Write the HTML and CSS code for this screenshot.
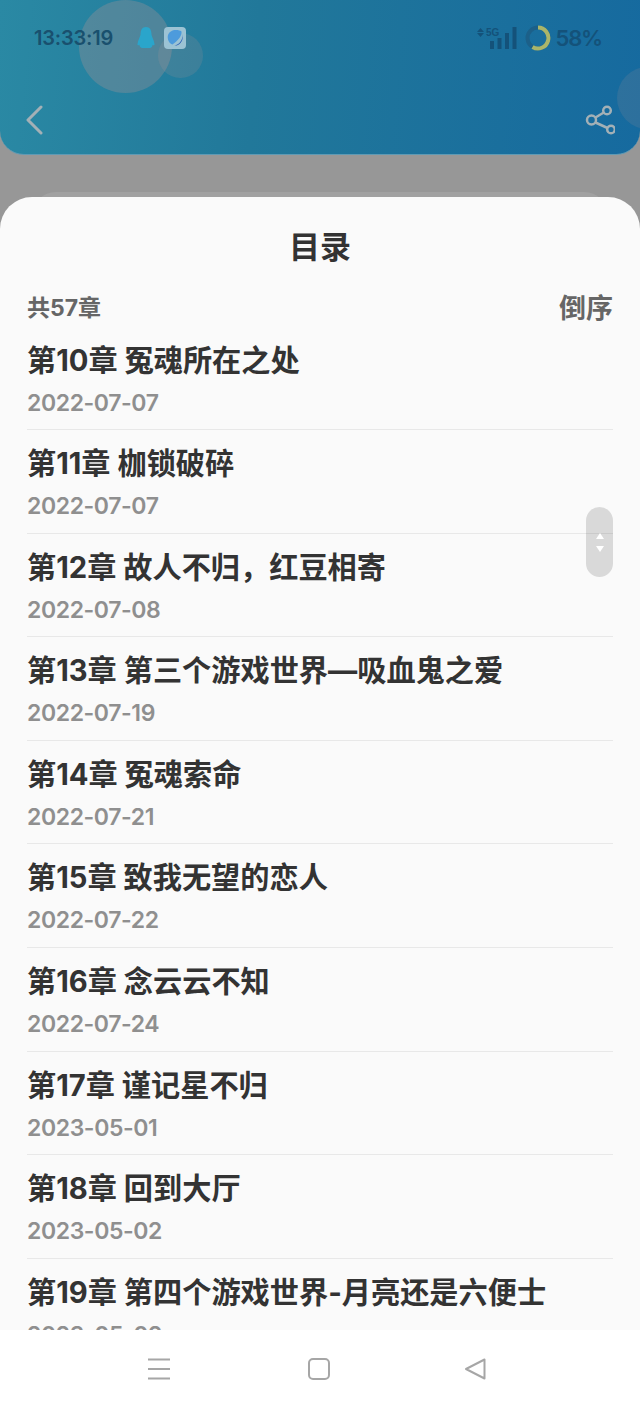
FILE: index.html
```html
<!DOCTYPE html>
<html lang="zh">
<head>
    <meta charset="UTF-8">
    <meta name="viewport" content="width=device-width, initial-scale=1.0">
    <title>目录</title>
    <link rel="stylesheet" href="styles.css">
</head>
<body>
    <div class="screen">
        <header class="header">
            <span class="bubble bubble-big"></span>
            <span class="bubble bubble-small"></span>
            <span class="bubble bubble-right"></span>
            <div class="status">
                <span class="time">13:33:19</span>
                <svg class="qq" width="18" height="22" viewBox="0 0 18 22">
                    <path fill="#2aa5cb" d="M9 0C5 0 3.600 3 3.500 7.500C3.400 9.500 1 13 .5 17c-.2 1.600.8 1.700 1.800.8C3 20.500 4 21 5 21h8c1 0 2-.5 2.700-3.200 1 .9 2 .8 1.800-.8-.5-4-2.900-7.500-3-9.500C14.400 3 13 0 9 0z"/>
                </svg>
                <svg class="app" width="22" height="22" viewBox="0 0 22 22">
                    <rect width="22" height="22" rx="4" fill="#9cc3d4"/>
                    <path fill="#4d9bdc" d="M4 8c1-3 4-5 8-5 2.500 0 4 .5 5.500 1.500C18 8 15 13 8.500 17.500 5 17 3 12 4 8z"/>
                    <path fill="#2c5fb5" d="M18.500 7c.5 6-3.500 11-8 11.500 4 .5 8-3 8.200-8 0-1.200-.1-2.500-.2-3.500z"/>
                </svg>
                <span class="status-right">
                    <svg class="signal" width="40" height="22" viewBox="0 0 40 22">
                        <path fill="#14527a" d="M3.500 1 7 5H0zM3.500 10 0 6h7z"/>
                        <text x="9" y="9" class="five-g">5G</text>
                        <rect x="13" y="14" width="4" height="8" fill="#14527a"/>
                        <rect x="20.500" y="11" width="4" height="11" fill="#14527a"/>
                        <rect x="28" y="6" width="4" height="16" fill="#14527a"/>
                        <rect x="35.500" y="0" width="4" height="22" fill="#14527a"/>
                    </svg>
                    <svg class="battery" width="26" height="26" viewBox="0 0 26 26">
                        <circle cx="13" cy="13" r="10.500" fill="none" stroke="#1c6089" stroke-width="4"/>
                        <path d="M13 2.500A10.500 10.500 0 1 1 7.500 22" fill="none" stroke="#a9b56a" stroke-width="4"/>
                    </svg>
                    <span class="percent">58%</span>
                </span>
            </div>
            <div class="toolbar">
                <svg width="18" height="30" viewBox="0 0 18 30">
                    <path d="M16 2 3 15l13 13" fill="none" stroke="#a3b0b6" stroke-width="3" stroke-linecap="round" stroke-linejoin="round"/>
                </svg>
                <svg width="30" height="30" viewBox="0 0 30 30">
                    <g fill="none" stroke="#a3b0b6" stroke-width="2.500">
                        <circle cx="6.500" cy="15" r="4.500"/>
                        <circle cx="22" cy="5.500" r="3.800"/>
                        <circle cx="26" cy="24.500" r="3.800"/>
                        <path d="M10.500 12.500 18.800 7.500M10.500 17.500l12 5.500"/>
                    </g>
                </svg>
            </div>
        </header>

        <div class="backdrop">
            <div class="sheet-behind"></div>
            <section class="sheet">
                <h1 class="sheet-title">目录</h1>
                <div class="summary">
                    <span class="count">共57章</span>
                    <span class="sort">倒序</span>
                </div>
                <ul class="chapters">
                    <li class="chapter"><p class="chapter-name">第10章 冤魂所在之处</p><p class="chapter-date">2022-07-07</p></li>
                    <li class="chapter"><p class="chapter-name">第11章 枷锁破碎</p><p class="chapter-date">2022-07-07</p></li>
                    <li class="chapter"><p class="chapter-name">第12章 故人不归，红豆相寄</p><p class="chapter-date">2022-07-08</p></li>
                    <li class="chapter"><p class="chapter-name">第13章 第三个游戏世界—吸血鬼之爱</p><p class="chapter-date">2022-07-19</p></li>
                    <li class="chapter"><p class="chapter-name">第14章 冤魂索命</p><p class="chapter-date">2022-07-21</p></li>
                    <li class="chapter"><p class="chapter-name">第15章 致我无望的恋人</p><p class="chapter-date">2022-07-22</p></li>
                    <li class="chapter"><p class="chapter-name">第16章 念云云不知</p><p class="chapter-date">2022-07-24</p></li>
                    <li class="chapter"><p class="chapter-name">第17章 谨记星不归</p><p class="chapter-date">2023-05-01</p></li>
                    <li class="chapter"><p class="chapter-name">第18章 回到大厅</p><p class="chapter-date">2023-05-02</p></li>
                    <li class="chapter"><p class="chapter-name">第19章 第四个游戏世界-月亮还是六便士</p><p class="chapter-date">2023-05-02</p></li>
                </ul>
                <div class="scroll-handle">
                    <span class="arrow-up"></span>
                    <span class="arrow-down"></span>
                </div>
            </section>
        </div>

        <nav class="navbar">
            <svg width="24" height="22" viewBox="0 0 24 22">
                <path d="M1 1.500h22M1 11h22M1 20.500h22" stroke="#a6a6a6" stroke-width="2" fill="none"/>
            </svg>
            <svg width="22" height="22" viewBox="0 0 22 22">
                <rect x="1" y="1" width="20" height="20" rx="4" stroke="#a6a6a6" stroke-width="2" fill="none"/>
            </svg>
            <svg class="nav-back" width="22" height="22" viewBox="0 0 22 22">
                <path d="M20.500 1.500v19L2 11z" stroke="#a6a6a6" stroke-width="2" stroke-linejoin="round" fill="none"/>
            </svg>
        </nav>
    </div>
</body>
</html>
```

FILE: styles.css
```css
* {
    box-sizing: border-box;
}
body {
    margin: 0;
    font-family: Inter, "Noto Sans CJK SC", sans-serif;
    background-color: #979797;
}
.screen {
    width: 640px;
    height: 1408px;
    display: flex;
    flex-direction: column;
    overflow: hidden;
    background-color: #979797;
}
.header {
    position: relative;
    flex: 0 0 155px;
    overflow: hidden;
    padding: 26px 25px 0 24px;
    border-radius: 0 0 24px 24px;
    background: linear-gradient(95deg, #2a89a4 0%, #21789a 40%, #166a9f 100%);
    border-bottom: 1px solid #5f9ab4;
}
.bubble {
    position: absolute;
    border-radius: 50%;
    background-color: rgba(180, 150, 150, 0.3);
}
.bubble-big {
    left: 79px;
    top: 0;
    width: 93px;
    height: 93px;
}
.bubble-small {
    left: 158px;
    top: 33px;
    width: 45px;
    height: 45px;
    background-color: rgba(180, 150, 150, 0.18);
}
.bubble-right {
    left: 617px;
    top: 67px;
    width: 62px;
    height: 62px;
    background-color: rgba(180, 150, 150, 0.15);
}
.status {
    position: relative;
    display: flex;
    align-items: center;
    height: 24px;
    padding-left: 10px;
    padding-right: 13px;
}
.time {
    font-size: 20px;
    font-weight: 600;
    letter-spacing: -0.2px;
    color: #19506e;
    width: 103px;
}
.qq {
    margin-right: 9px;
}
.status-right {
    margin-left: auto;
    display: flex;
    align-items: center;
    gap: 8px;
}
.five-g {
    font-family: "Liberation Sans", sans-serif;
    font-size: 10px;
    font-weight: 700;
    fill: #14527a;
}
.percent {
    font-size: 22px;
    font-weight: 600;
    letter-spacing: -1.2px;
    color: #14527a;
    margin-left: -3px;
}
.toolbar {
    position: relative;
    display: flex;
    justify-content: space-between;
    align-items: center;
    margin-top: 55px;
    padding-left: 1px;
    height: 30px;
}
.backdrop {
    position: relative;
    flex: 1;
    min-height: 0;
    padding-top: 42px;
}
.sheet-behind {
    position: absolute;
    top: 37px;
    left: 32px;
    right: 32px;
    height: 40px;
    border-radius: 24px 24px 0 0;
    background-color: #a1a1a1;
}
.sheet {
    position: relative;
    height: 100%;
    overflow: hidden;
    padding: 0 27px;
    border-radius: 32px 32px 0 0;
    background-color: #fafafa;
}
.sheet-title {
    margin: 0;
    padding-top: 29px;
    font-size: 31px;
    line-height: 42px;
    font-weight: 700;
    text-align: center;
    color: #333;
}
.summary {
    display: flex;
    justify-content: space-between;
    align-items: center;
    margin-top: 18px;
    margin-bottom: 0.7px;
    height: 40px;
}
.count {
    font-size: 23px;
    font-weight: 700;
    color: #666;
}
.sort {
    font-size: 27px;
    font-weight: 700;
    color: #666;
}
.chapters {
    list-style: none;
    margin: 0;
    padding: 0;
}
.chapter {
    height: 103.55px;
    padding-top: 14px;
    border-bottom: 1px solid #e8e8e8;
}
.chapter-name {
    margin: 0;
    font-size: 29.2px;
    line-height: 40px;
    font-weight: 700;
    color: #333;
    white-space: nowrap;
}
.chapter-date {
    margin: 2px 0 0;
    font-size: 23px;
    line-height: 40px;
    font-weight: 600;
    letter-spacing: -0.4px;
    color: #8f8f8f;
}
.scroll-handle {
    position: absolute;
    top: 310px;
    left: 586px;
    width: 27px;
    height: 70px;
    border-radius: 14px;
    background-color: rgba(0, 0, 0, 0.13);
    display: flex;
    flex-direction: column;
    align-items: center;
    justify-content: center;
    gap: 7px;
}
.arrow-up {
    width: 0;
    height: 0;
    border-left: 4px solid transparent;
    border-right: 4px solid transparent;
    border-bottom: 6px solid #fff;
}
.arrow-down {
    width: 0;
    height: 0;
    border-left: 4px solid transparent;
    border-right: 4px solid transparent;
    border-top: 6px solid #fff;
}
.navbar {
    flex: 0 0 78px;
    display: flex;
    justify-content: center;
    align-items: center;
    gap: 137px;
    padding-right: 8px;
    background-color: #fff;
}
.nav-back {
    margin-left: -3px;
}
```
